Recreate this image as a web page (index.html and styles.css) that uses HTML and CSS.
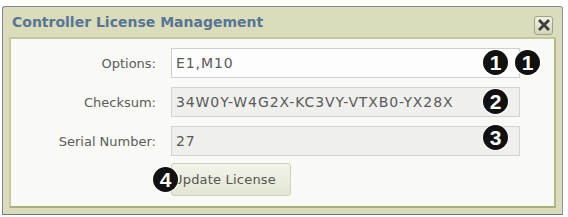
FILE: index.html
```html
<!DOCTYPE html>
<html>
<head>
<meta charset="utf-8">
<link rel="stylesheet" href="styles.css">
</head>
<body>
<div class="dialog">
  <div class="titlebar">
    <span class="title">Controller License Management</span>
    <span class="close"><svg width="12" height="12" viewBox="0 0 12 12"><path d="M2 2 L10 10 M10 2 L2 10" stroke="#3d3d3d" stroke-width="2.8" stroke-linecap="square"/></svg></span>
  </div>
  <div class="panel">
    <div class="form">
      <label class="label">Options:</label>
      <div class="field"><div class="input editable">E1,M10</div><span class="badge b1a">1</span><span class="badge b1b">1</span></div>
      <label class="label">Checksum:</label>
      <div class="field"><div class="input readonly">34W0Y-W4G2X-KC3VY-VTXB0-YX28X</div><span class="badge b2">2</span></div>
      <label class="label">Serial Number:</label>
      <div class="field"><div class="input readonly">27</div><span class="badge b3">3</span></div>
      <span></span>
      <div class="field btnfield"><button class="btn">Update License</button><span class="badge b4">4</span></div>
    </div>
  </div>
</div>
</body>
</html>
```
FILE: styles.css
```css
html, body {
  margin: 0;
  padding: 0;
  background: #ffffff;
}
body {
  font-family: "DejaVu Sans", Verdana, sans-serif;
  width: 568px;
  height: 217px;
  overflow: hidden;
}
.dialog {
  margin: 6px 5px 0 2px;
  height: 209px;
  box-sizing: border-box;
  border: 1px solid #7f8496;
  border-right-color: #8e92a2;
  border-bottom-color: #6f7487;
  border-radius: 3px 3px 0 0;
  background: #dadcbc;
  padding: 0 6px 6px 6px;
  display: flex;
  flex-direction: column;
}
.titlebar {
  height: 30px;
  flex: none;
  display: flex;
  align-items: center;
  justify-content: space-between;
  padding: 0 3px 0 3px;
}
.title {
  font-weight: bold;
  font-size: 14px;
  color: #587592;
}
.close {
  width: 17px;
  height: 17px;
  border: 1px solid #9ea187;
  border-radius: 3px;
  background: linear-gradient(#f1f2e2, #d4d6b6);
  display: flex;
  align-items: center;
  justify-content: center;
  margin-top: 6px;
}
.panel {
  flex: 1;
  background: #f9f9f6;
  border: 2px solid #c4c8a0;
  border-bottom-color: #a9ae80;
  border-right-color: #b3b88a;
  padding: 9px 0 0 0;
}
.form {
  display: grid;
  grid-template-columns: 145px 349px;
  column-gap: 15px;
  row-gap: 9px;
  align-items: center;
}
.label {
  text-align: right;
  font-size: 13px;
  color: #5b5b5b;
}
.field {
  position: relative;
  height: 30px;
}
.input {
  box-sizing: border-box;
  height: 30px;
  border: 1px solid #d3d3d1;
  padding: 0 4px;
  display: flex;
  align-items: center;
  font-size: 14px;
  letter-spacing: 0.9px;
  color: #5a5a5a;
}
.editable {
  background: #fdfdfd;
  border-color: #cfcfcf;
}
.readonly {
  background: #efefed;
}
.btnfield {
  height: 33px;
  margin-top: -2px;
}
.btn {
  height: 33px;
  width: 120px;
  border: 1px solid #cdcfc0;
  border-radius: 3px;
  background: linear-gradient(#f3f4ea, #e3e5d3);
  font-family: "DejaVu Sans", Verdana, sans-serif;
  font-size: 13px;
  letter-spacing: 0.2px;
  color: #555;
  padding: 0 0 0 1px;
  text-align: left;
}
.badge {
  position: absolute;
  width: 25px;
  height: 25px;
  border-radius: 50%;
  background: #111;
  color: #fff;
  font-family: "Liberation Sans", Arial, sans-serif;
  font-weight: bold;
  font-size: 21px;
  line-height: 25px;
  text-align: center;
  box-shadow: 0 0 0 1px rgba(255,255,255,0.7);
}
.b1a { left: 312px; top: 2px; }
.b1b { left: 344px; top: 2px; }
.b2 { left: 312px; top: 2px; }
.b3 { left: 312px; top: -1px; }
.b4 { left: -18px; top: 4px; }
```
